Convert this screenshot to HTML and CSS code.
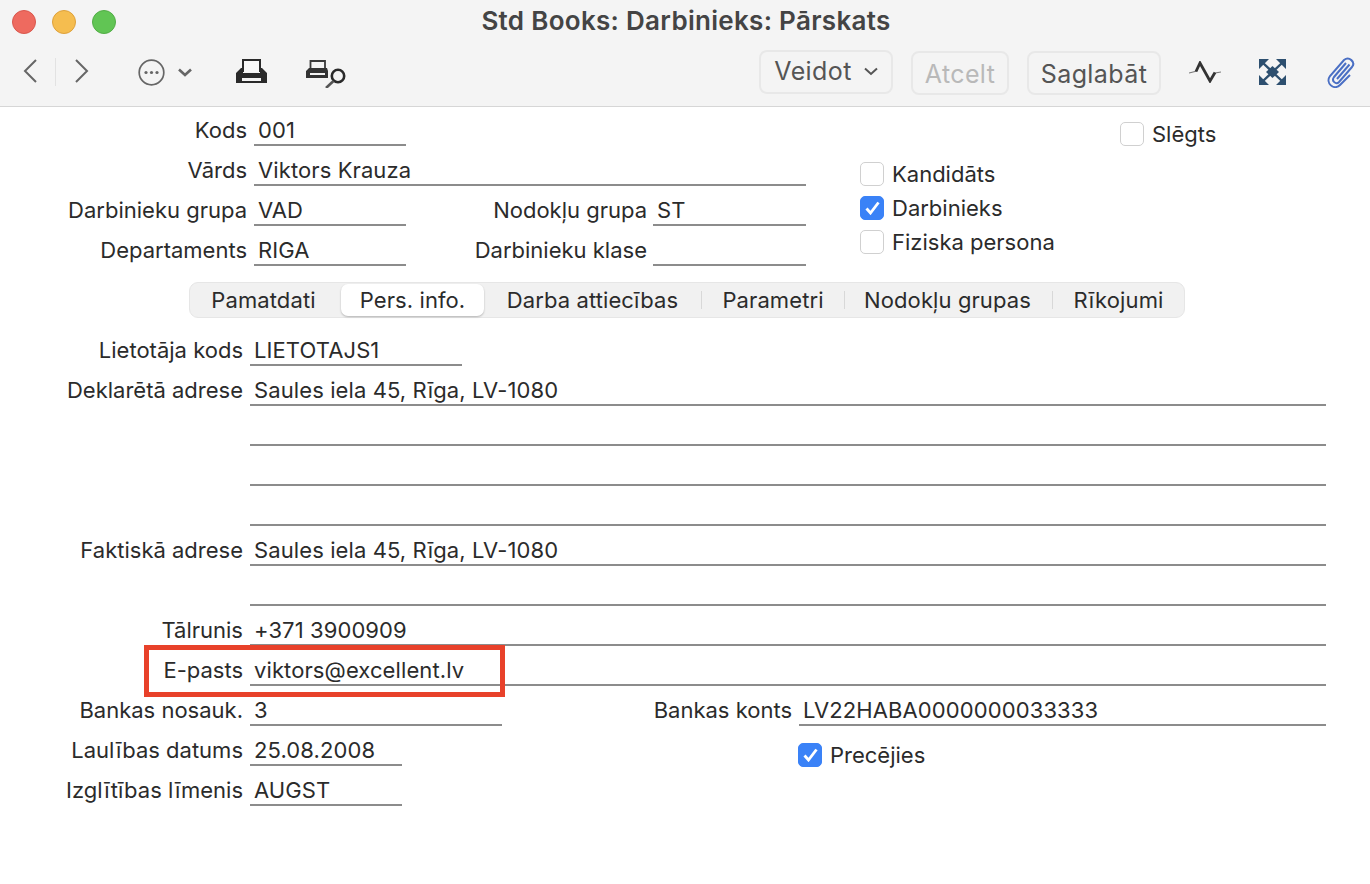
FILE: index.html
```html
<!DOCTYPE html>
<html lang="lv">
<head>
    <meta charset="UTF-8">
    <meta name="viewport" content="width=device-width, initial-scale=1.0">
    <title>Std Books: Darbinieks: Pārskats</title>
    <link rel="stylesheet" href="styles.css">
</head>
<body>

<div class="window">
    <div class="header">
        <div class="lights">
            <span class="light red"></span>
            <span class="light yellow"></span>
            <span class="light green"></span>
        </div>
        <h1>Std Books: Darbinieks: Pārskats</h1>

        <div class="toolbar">
            <svg class="icon nav-back" width="14" height="24" viewBox="0 0 14 24"><path d="M13 1 L2 12 L13 23" fill="none" stroke="#666" stroke-width="2"/></svg>
            <span class="nav-sep"></span>
            <svg class="icon nav-next" width="14" height="24" viewBox="0 0 14 24"><path d="M1 1 L12 12 L1 23" fill="none" stroke="#666" stroke-width="2"/></svg>

            <svg class="icon more" width="27" height="27" viewBox="0 0 27 27">
                <circle cx="13.5" cy="13.5" r="12.3" fill="none" stroke="#666" stroke-width="1.7"/>
                <circle cx="8" cy="13.5" r="1.6" fill="#666"/>
                <circle cx="13.5" cy="13.5" r="1.6" fill="#666"/>
                <circle cx="19" cy="13.5" r="1.6" fill="#666"/>
            </svg>
            <svg class="icon more-arrow" width="14" height="9" viewBox="0 0 14 9"><path d="M1 1.5 L7 7 L13 1.5" fill="none" stroke="#666" stroke-width="2.6"/></svg>

            <svg class="icon print" width="31" height="24" viewBox="0 0 31 24">
                <path d="M7 13 V1 H24 V13" fill="#f8f8f8" stroke="#2a2a2a" stroke-width="2"/>
                <path d="M5 9 H7 V14 H24 V9 H26 L31 14 V24 H0 V14 Z M6 19 V22 H25 V19 Z" fill="#2a2a2a" fill-rule="evenodd"/>
            </svg>
            <svg class="icon preview" width="41" height="28" viewBox="0 0 41 28">
                <path d="M4.5 9 V1 H19 V9" fill="#f4f4f4" stroke="#3a3a3a" stroke-width="1.8"/>
                <path d="M3 8 H21 L22 11 V18 H0 V11 Z M4 13 V15 H19 V13 Z" fill="#333" fill-rule="evenodd"/>
                <circle cx="32" cy="16" r="6.2" fill="#f4f4f4" stroke="#2a2a2a" stroke-width="2.6"/>
                <path d="M27.5 21 L20 28" stroke="#555" stroke-width="2.6"/>
            </svg>

            <div class="toolbar-right">
                <button class="tool-btn veidot">Veidot
                    <svg width="14" height="9" viewBox="0 0 14 9"><path d="M1 1.5 L7 7 L13 1.5" fill="none" stroke="#555" stroke-width="2"/></svg>
                </button>
                <button class="tool-btn atcelt">Atcelt</button>
                <button class="tool-btn saglabat">Saglabāt</button>

                <svg class="icon pulse" width="32" height="22" viewBox="0 0 32 22">
                    <path d="M0 12 L8 10 M26 12 L32 11" fill="none" stroke="#777" stroke-width="1.2"/>
                    <path d="M7 10.5 L11 2 L21 20 L26 11.5" fill="none" stroke="#333" stroke-width="2.8"/>
                </svg>
                <svg class="icon expand" width="27" height="26" viewBox="0 0 27 26">
                    <path d="M0 0 H10 L0 10 Z M27 0 V10 L17 0 Z M0 26 V16 L10 26 Z M27 26 H17 L27 16 Z" fill="#2d4f6f"/>
                    <path d="M4 4 L23 22 M23 4 L4 22" stroke="#2d4f6f" stroke-width="2.4"/>
                    <path d="M13.500 7 L20 13 L13.500 19 L7 13 Z" fill="#2d4f6f"/>
                </svg>
                <svg class="icon clip" width="28" height="31" viewBox="0 0 28 31">
                    <path d="M19 6 L7 20 C4 24 9 28 12 25 L25 10 C29 5 22 -1 17 3 L3 19 C-2 26 7 34 13 28 L23 18" fill="none" stroke="#4a6fc4" stroke-width="2"/>
                    <path d="M22.500 7.500 L10 22" fill="none" stroke="#4a6fc4" stroke-width="2"/>
                </svg>
            </div>
        </div>
    </div>

    <div class="form">
        <div class="top-part">
            <div class="top-fields">
                <div class="row">
                    <label class="lbl lbl-top">Kods</label>
                    <div class="field w-152">001</div>
                </div>
                <div class="row">
                    <label class="lbl lbl-top">Vārds</label>
                    <div class="field w-552">Viktors Krauza</div>
                </div>
                <div class="row">
                    <label class="lbl lbl-top">Darbinieku grupa</label>
                    <div class="field w-152">VAD</div>
                    <label class="lbl lbl-top2">Nodokļu grupa</label>
                    <div class="field w-153">ST</div>
                </div>
                <div class="row">
                    <label class="lbl lbl-top">Departaments</label>
                    <div class="field w-152">RIGA</div>
                    <label class="lbl lbl-top2">Darbinieku klase</label>
                    <div class="field w-153"></div>
                </div>
            </div>

            <div class="top-checks">
                <div class="check-row slegts"><span class="check"></span>Slēgts</div>
                <div class="check-row"><span class="check"></span>Kandidāts</div>
                <div class="check-row"><span class="check checked"><svg width="15" height="14" viewBox="0 0 15 14"><path d="M1.5 7.500 L5.500 12 L13.500 1.500" fill="none" stroke="#fff" stroke-width="2.8"/></svg></span>Darbinieks</div>
                <div class="check-row"><span class="check"></span>Fiziska persona</div>
            </div>
        </div>

        <div class="tabs">
            <div class="tab tab-1">Pamatdati</div>
            <div class="tab tab-2 active">Pers. info.</div>
            <div class="tab tab-3">Darba attiecības</div>
            <span class="tab-sep"></span>
            <div class="tab tab-4">Parametri</div>
            <span class="tab-sep"></span>
            <div class="tab tab-5">Nodokļu grupas</div>
            <span class="tab-sep"></span>
            <div class="tab tab-6">Rīkojumi</div>
        </div>

        <div class="fields">
            <div class="row">
                <label class="lbl">Lietotāja kods</label>
                <div class="field w-212">LIETOTAJS1</div>
            </div>
            <div class="row">
                <label class="lbl">Deklarētā adrese</label>
                <div class="field w-full">Saules iela 45, Rīga, LV-1080</div>
            </div>
            <div class="row">
                <label class="lbl"></label>
                <div class="field w-full"></div>
            </div>
            <div class="row">
                <label class="lbl"></label>
                <div class="field w-full"></div>
            </div>
            <div class="row">
                <label class="lbl"></label>
                <div class="field w-full"></div>
            </div>
            <div class="row">
                <label class="lbl">Faktiskā adrese</label>
                <div class="field w-full">Saules iela 45, Rīga, LV-1080</div>
            </div>
            <div class="row">
                <label class="lbl"></label>
                <div class="field w-full"></div>
            </div>
            <div class="row">
                <label class="lbl">Tālrunis</label>
                <div class="field w-full">+371 3900909</div>
            </div>
            <div class="row row-email">
                <label class="lbl">E-pasts</label>
                <div class="field w-full">viktors@excellent.lv</div>
                <span class="highlight"></span>
            </div>
            <div class="row">
                <label class="lbl">Bankas nosauk.</label>
                <div class="field w-252">3</div>
                <label class="lbl lbl-bank">Bankas konts</label>
                <div class="field w-527">LV22HABA0000000033333</div>
            </div>
            <div class="row">
                <label class="lbl">Laulības datums</label>
                <div class="field w-152">25.08.2008</div>
                <div class="check-row precejies"><span class="check checked"><svg width="15" height="14" viewBox="0 0 15 14"><path d="M1.5 7.500 L5.500 12 L13.500 1.500" fill="none" stroke="#fff" stroke-width="2.8"/></svg></span>Precējies</div>
            </div>
            <div class="row">
                <label class="lbl">Izglītības līmenis</label>
                <div class="field w-152">AUGST</div>
            </div>
        </div>
    </div>
</div>

</body>
</html>
```

FILE: styles.css
```css
html, body {
    margin: 0;
    padding: 0;
    background-color: #fff;
}
body {
    font-family: Inter, "Liberation Sans", sans-serif;
    font-size: 22px;
    letter-spacing: 0.1px;
    color: #2b2b2b;
    height: 884px;
    overflow: hidden;
}
.header {
    height: 106px;
    background-color: #f4f4f4;
    border-bottom: 1px solid #d6d6d6;
    position: relative;
}
.lights {
    display: flex;
    gap: 16px;
    padding: 10px 0 0 12px;
}
.light {
    width: 24px;
    height: 24px;
    border-radius: 50%;
    box-sizing: border-box;
}
.red { background-color: #ee6a5f; border: 1px solid #d9574d; }
.yellow { background-color: #f5bd4f; border: 1px solid #dea13b; }
.green { background-color: #61c554; border: 1px solid #52ad46; }
.header h1 {
    position: absolute;
    top: 7px;
    left: 0;
    width: 1372px;
    margin: 0;
    text-align: center;
    font-size: 26px;
    font-weight: 600;
    line-height: 28px;
    letter-spacing: 0.3px;
    color: #444;
}
.toolbar {
    display: flex;
    align-items: center;
    height: 60px;
    margin-top: 8px;
    padding-left: 23px;
}
.icon { flex: none; display: block; }
.nav-back { margin-top: -2px; }
.nav-next { margin-top: -2px; }
.nav-sep {
    width: 1px;
    height: 28px;
    margin: 0 19px 0 18px;
    background-color: #e2e2e2;
}
.more { margin-left: 49px; }
.more-arrow { margin-left: 13px; margin-top: 1px; }
.print { margin-left: 44px; margin-top: -2px; }
.preview { margin-left: 39px; margin-top: 4px; }
.toolbar-right {
    margin-left: auto;
    display: flex;
    align-items: center;
    padding-right: 15px;
}
.tool-btn {
    font-family: inherit;
    font-size: 25px;
    letter-spacing: 0.4px;
    height: 44px;
    box-sizing: border-box;
    border: 2px solid #e8e8e8;
    border-radius: 8px;
    background-color: #f4f4f4;
    color: #555;
    padding: 3px 0 0;
    display: flex;
    align-items: center;
    justify-content: center;
}
.veidot { width: 134px; gap: 12px; margin-right: 18px; padding: 0 0 2px; }
.atcelt { width: 98px; color: #b9b9b9; margin-right: 18px; margin-top: 1px; }
.saglabat { width: 134px; margin-right: 28px; margin-top: 1px; }
.pulse { margin-right: 38px; }
.expand { margin-right: 41px; }
.form {
    position: relative;
    margin-top: -1px;
}
.top-part {
    display: flex;
}
.top-fields { width: 806px; }
.top-checks {
    margin-left: 54px;
    padding-top: 16px;
    letter-spacing: 0;
}
.check-row {
    display: flex;
    align-items: center;
    gap: 8px;
    height: 34px;
}
.slegts {
    margin-left: 260px;
    height: 24px;
    margin-bottom: 11px;
}
.check {
    width: 24px;
    height: 24px;
    box-sizing: border-box;
    border: 1px solid #d0d0d0;
    border-radius: 5px;
    background-color: #fff;
    display: flex;
    align-items: center;
    justify-content: center;
    flex: none;
}
.check.checked {
    background-color: #3a82f7;
    border-color: #3a82f7;
}
.row {
    display: flex;
    height: 40px;
    align-items: flex-end;
    position: relative;
}
.lbl {
    width: 243px;
    flex: none;
    text-align: right;
    line-height: 32px;
    height: 32px;
    margin-right: 7px;
    white-space: nowrap;
    letter-spacing: 0;
}
.lbl-top { width: 247px; }
.lbl-top2 { width: 241px; margin-right: 6px; }
.lbl-bank { width: 290px; }
.field {
    box-sizing: border-box;
    border-bottom: 2px solid #8c8c8c;
    height: 32px;
    line-height: 32px;
    padding-left: 4px;
    white-space: nowrap;
    flex: none;
}
.w-152 { width: 152px; }
.w-153 { width: 153px; }
.w-212 { width: 212px; }
.w-252 { width: 252px; }
.w-527 { width: 527px; }
.w-552 { width: 552px; }
.w-full { width: 1076px; }
.tabs {
    display: flex;
    align-items: center;
    box-sizing: border-box;
    width: 996px;
    height: 36px;
    margin: 16px 0 8px 189px;
    background-color: #f1f1f1;
    border: 1px solid #e6e6e6;
    border-radius: 9px;
}
.tab {
    text-align: center;
    height: 32px;
    line-height: 33px;
    box-sizing: border-box;
    flex: none;
}
.tab-1 { width: 151px; padding-right: 4px; }
.tab-2 { width: 143px; }
.tab-3 { width: 217px; }
.tab-4 { width: 142px; }
.tab-5 { width: 207px; padding-right: 2px; }
.tab-6 { width: 131px; }
.tab.active {
    background-color: #fff;
    border-radius: 7px;
    box-shadow: 0 1px 2px rgba(0, 0, 0, 0.25);
}
.tab-sep {
    width: 1px;
    height: 18px;
    background-color: #d8d8d8;
    flex: none;
}
.highlight {
    position: absolute;
    left: 144px;
    top: -1px;
    width: 361px;
    height: 52px;
    box-sizing: border-box;
    border: 5px solid #e8412a;
}
.precejies {
    margin-left: 396px;
    margin-bottom: -5px;
    height: 32px;
    letter-spacing: 0;
}
```
